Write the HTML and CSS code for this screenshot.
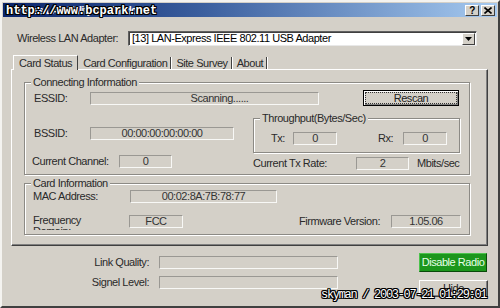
FILE: index.html
```html
<!DOCTYPE html>
<html>
<head>
    <link rel="stylesheet" href="styles.css">
</head>
<body>
<div class="window">
    <div class="titlebar">
        <span class="title">Wireless LAN Utility for Windows</span>
        <span class="wm-top">http://www.bcpark.net</span>
        <div class="caption-btns">
            <span class="cap-btn">?</span>
            <span class="cap-btn">
                <svg width="8" height="7" viewBox="0 0 8 7"><path d="M0.5 0.5 L7.5 6.5 M7.5 0.5 L0.5 6.5" stroke="#000" stroke-width="1.6"/></svg>
            </span>
        </div>
    </div>

    <div class="adapter-row">
        <span class="lbl adapter-label">Wireless LAN Adapter:</span>
        <div class="combo">
            <span class="combo-text">[13] LAN-Express IEEE 802.11 USB Adapter</span>
            <span class="combo-arrow">
                <svg width="7" height="4" viewBox="0 0 7 4"><path d="M0 0 H7 L3.5 4 Z" fill="#000"/></svg>
            </span>
        </div>
    </div>

    <div class="tabs">
        <span class="tab active">Card Status</span>
        <span class="tab">Card Configuration</span>
        <span class="tab">Site Survey</span>
        <span class="tab">About</span>
    </div>

    <div class="panel">
        <!-- Connecting Information -->
        <div class="group connect">
            <span class="group-title">Connecting Information</span>
            <div class="row essid-row">
                <span class="lbl essid-lbl">ESSID:</span>
                <span class="field essid-field">Scanning......</span>
                <span class="btn rescan"><span class="focus">Rescan</span></span>
            </div>
            <div class="row mid-row">
                <div class="bssid">
                    <span class="lbl essid-lbl">BSSID:</span>
                    <span class="field bssid-field">00:00:00:00:00:00</span>
                </div>
                <div class="group throughput">
                    <span class="group-title">Throughput(Bytes/Sec)</span>
                    <span class="lbl tx-lbl">Tx:</span>
                    <span class="field small-field">0</span>
                    <span class="lbl rx-lbl">Rx:</span>
                    <span class="field small-field">0</span>
                </div>
            </div>
            <div class="row rate-row">
                <div class="channel">
                    <span class="lbl channel-lbl">Current Channel:</span>
                    <span class="field num-field">0</span>
                </div>
                <div class="txrate">
                    <span class="lbl txrate-lbl">Current Tx Rate:</span>
                    <span class="field num-field">2</span>
                    <span class="lbl unit">Mbits/sec</span>
                </div>
            </div>
        </div>

        <!-- Card Information -->
        <div class="group card">
            <span class="group-title">Card Information</span>
            <div class="row mac-row">
                <span class="lbl mac-lbl">MAC Address:</span>
                <span class="field mac-field">00:02:8A:7B:78:77</span>
            </div>
            <div class="row freq-row">
                <span class="lbl freq-lbl">Frequency<br>Domain:</span>
                <span class="field freq-field">FCC</span>
                <span class="lbl fw-lbl">Firmware Version:</span>
                <span class="field fw-field">1.05.06</span>
            </div>
        </div>
    </div>

    <div class="bottom">
        <div class="levels">
            <div class="level-row">
                <span class="lbl level-lbl">Link Quality:</span>
                <span class="field level-field"></span>
            </div>
            <div class="level-row">
                <span class="lbl level-lbl">Signel Level:</span>
                <span class="field level-field"></span>
            </div>
        </div>
        <div class="actions">
            <span class="btn radio-btn">Disable Radio</span>
            <span class="btn hide-btn">Hide</span>
        </div>
    </div>

    <span class="wm-bottom">skyman / 2003-07-21 01:29:01</span>
</div>
</body>
</html>
```

FILE: styles.css
```css
/* page + window frame */
body {
    margin: 0;
    background-color: #d4d0c8;
    font-family: "Liberation Sans", Arial, sans-serif;
    font-size: 11px;
    letter-spacing: -0.45px;
    line-height: 13px;
    color: #2a2a2a;
}

.window {
    position: relative;
    box-sizing: border-box;
    width: 500px;
    height: 308px;
    overflow: hidden;
    padding: 1px;
    border: 2px solid;
    border-color: #f4f3f0 #404040 #404040 #f4f3f0;
    background-color: #d4d0c8;
}

/* title bar */
.titlebar {
    position: relative;
    display: flex;
    align-items: center;
    height: 14px;
    padding-left: 3px;
    background: linear-gradient(to right, #0a246a, #3a5e9e 40%, #a6caf0);
}

.title {
    color: #fff;
    font-weight: bold;
    font-size: 10px;
    white-space: nowrap;
}

.wm-top {
    position: absolute;
    left: 3px;
    top: 1px;
    font-family: "Liberation Mono", monospace;
    font-weight: bold;
    font-size: 12px;
    letter-spacing: 0;
    line-height: 14px;
    color: #fff;
    text-shadow: 1px 0 0 #000, -1px 0 0 #000, 0 1px 0 #000, 0 -1px 0 #000,
                 1px 1px 0 #000, -1px -1px 0 #000, 1px -1px 0 #000, -1px 1px 0 #000;
}

.caption-btns {
    display: flex;
    gap: 2px;
    margin-left: auto;
    margin-right: 2px;
}

.cap-btn {
    display: flex;
    align-items: center;
    justify-content: center;
    box-sizing: border-box;
    width: 14px;
    height: 11px;
    background-color: #d4d0c8;
    border: 1px solid;
    border-color: #fff #404040 #404040 #fff;
    font-weight: bold;
    font-size: 10px;
    color: #000;
}

/* adapter selector */
.adapter-row {
    display: flex;
    align-items: center;
    margin-top: 14px;
    padding-left: 14px;
}

.adapter-label {
    width: 111px;
}

.combo {
    display: flex;
    align-items: center;
    box-sizing: border-box;
    width: 349px;
    height: 15px;
    background-color: #fff;
    border: 1px solid;
    border-color: #606060 #e8e8e8 #e8e8e8 #606060;
    box-shadow: inset 1px 1px 0 #404040;
}

.combo-text {
    padding-left: 3px;
    color: #000;
    white-space: nowrap;
}

.combo-arrow {
    display: flex;
    align-items: center;
    justify-content: center;
    box-sizing: border-box;
    width: 13px;
    height: 12px;
    margin-left: auto;
    margin-right: 1px;
    background-color: #d4d0c8;
    border: 1px solid;
    border-color: #fff #404040 #404040 #fff;
}

/* tabs */
.tabs {
    display: flex;
    align-items: flex-end;
    margin-top: 9px;
    margin-left: 10px;
    height: 14px;
}

.tab {
    padding: 0 3px 0 3px;
    height: 12px;
    line-height: 12px;
    white-space: nowrap;
    border-right: 1px solid #404040;
    box-shadow: 1px 0 0 #fff;
    margin-right: 2px;
}

.tab.active {
    position: relative;
    height: 14px;
    line-height: 14px;
    padding: 0 5px;
    margin-bottom: -1px;
    background-color: #d4d0c8;
    border-top: 1px solid #fff;
    border-left: 1px solid #fff;
    border-right: 1px solid #404040;
    box-shadow: none;
    z-index: 1;
}

.panel {
    box-sizing: border-box;
    width: 477px;
    height: 177px;
    margin-left: 8px;
    padding: 12px 0 0 12px;
    border: 1px solid;
    border-color: #fff #404040 #404040 #fff;
    box-shadow: inset -1px -1px 0 #808080;
}

/* group boxes */
.group {
    position: relative;
    box-sizing: border-box;
    border: 1px solid #8c8a85;
    box-shadow: inset 1px 1px 0 #fff, 1px 1px 0 #fff;
}

.group-title {
    position: absolute;
    top: -7px;
    left: 6px;
    padding: 0 2px;
    white-space: nowrap;
    background-color: #d4d0c8;
}

.connect {
    width: 446px;
    height: 93px;
    padding: 7px 0 0 9px;
}

.card {
    width: 446px;
    height: 52px;
    margin-top: 8px;
    padding: 6px 0 0 8px;
}

.row {
    display: flex;
    align-items: center;
}

.lbl {
    white-space: nowrap;
}

.field {
    box-sizing: border-box;
    display: block;
    height: 13px;
    line-height: 11px;
    text-align: center;
    white-space: nowrap;
    color: #333;
    border: 1px solid;
    border-color: #9a9893 #f8f8f6 #f8f8f6 #9a9893;
}

.essid-lbl {
    width: 56px;
}

.essid-field {
    width: 229px;
    padding-left: 30px;
}

.btn {
    box-sizing: border-box;
    display: flex;
    align-items: center;
    justify-content: center;
    white-space: nowrap;
    background-color: #d4d0c8;
    color: #222;
}

.rescan {
    width: 96px;
    height: 16px;
    margin-left: 44px;
    padding: 2px;
    border: 1px solid #000;
    box-shadow: inset 1px 1px 0 #fff, inset -1px -1px 0 #808080;
}

.rescan .focus {
    flex: 1;
    height: 10px;
    line-height: 10px;
    text-align: center;
    outline: 1px dotted #333;
}

.mid-row {
    align-items: flex-start;
    margin-top: 12px;
}

.bssid {
    display: flex;
    align-items: center;
    margin-top: 9px;
}

.bssid-field {
    width: 144px;
}

.throughput {
    display: flex;
    align-items: center;
    width: 207px;
    height: 35px;
    margin-left: 19px;
    padding: 5px 0 0 17px;
}

.small-field {
    width: 44px;
}

.tx-lbl {
    width: 22px;
}

.rx-lbl {
    width: 25px;
    margin-left: 41px;
}

.rate-row {
    align-items: flex-start;
    margin-top: 2px;
    margin-left: -2px;
}

.channel,
.txrate {
    display: flex;
    align-items: center;
}

.channel-lbl {
    width: 87px;
}

.num-field {
    width: 53px;
}

.txrate {
    margin-top: 2px;
    margin-left: 81px;
}

.txrate-lbl {
    width: 103px;
}

.unit {
    margin-left: 8px;
}

.mac-lbl {
    width: 97px;
}

.mac-field {
    width: 147px;
}

.freq-row {
    align-items: flex-start;
    margin-top: 12px;
}

.freq-lbl {
    width: 66px;
    height: 15px;
    margin-right: 30px;
    line-height: 11px;
    overflow: hidden;
}

.freq-field {
    width: 54px;
}

.fw-lbl {
    width: 92px;
    margin-left: 116px;
}

.fw-field {
    width: 70px;
}

/* bottom area */
.bottom {
    display: flex;
    align-items: flex-start;
    margin-top: 7px;
}

.levels {
    display: flex;
    flex-direction: column;
    gap: 7px;
    margin-top: 3px;
}

.level-row {
    display: flex;
    align-items: center;
}

.level-lbl {
    width: 146px;
    margin-right: 10px;
    text-align: right;
}

.level-field {
    width: 179px;
}

.actions {
    display: flex;
    flex-direction: column;
    gap: 8px;
    margin-left: auto;
    margin-right: 9px;
}

.radio-btn {
    width: 68px;
    height: 19px;
    background-color: #1c961c;
    color: #e8ffe8;
    border: 1px solid;
    border-color: #4cc24c #0a4a0a #0a4a0a #4cc24c;
}

.hide-btn {
    width: 69px;
    height: 17px;
    border: 1px solid;
    border-color: #fff #404040 #404040 #fff;
    box-shadow: inset -1px -1px 0 #808080;
}

.wm-bottom {
    position: absolute;
    left: 319px;
    top: 286px;
    font-family: "Liberation Mono", monospace;
    font-size: 12px;
    line-height: 14px;
    letter-spacing: -1.3px;
    color: #fff;
    text-shadow: 1px 0 0 #000, -1px 0 0 #000, 0 1px 0 #000, 0 -1px 0 #000,
                 1px 1px 0 #000, -1px -1px 0 #000, 1px -1px 0 #000, -1px 1px 0 #000;
}
```
